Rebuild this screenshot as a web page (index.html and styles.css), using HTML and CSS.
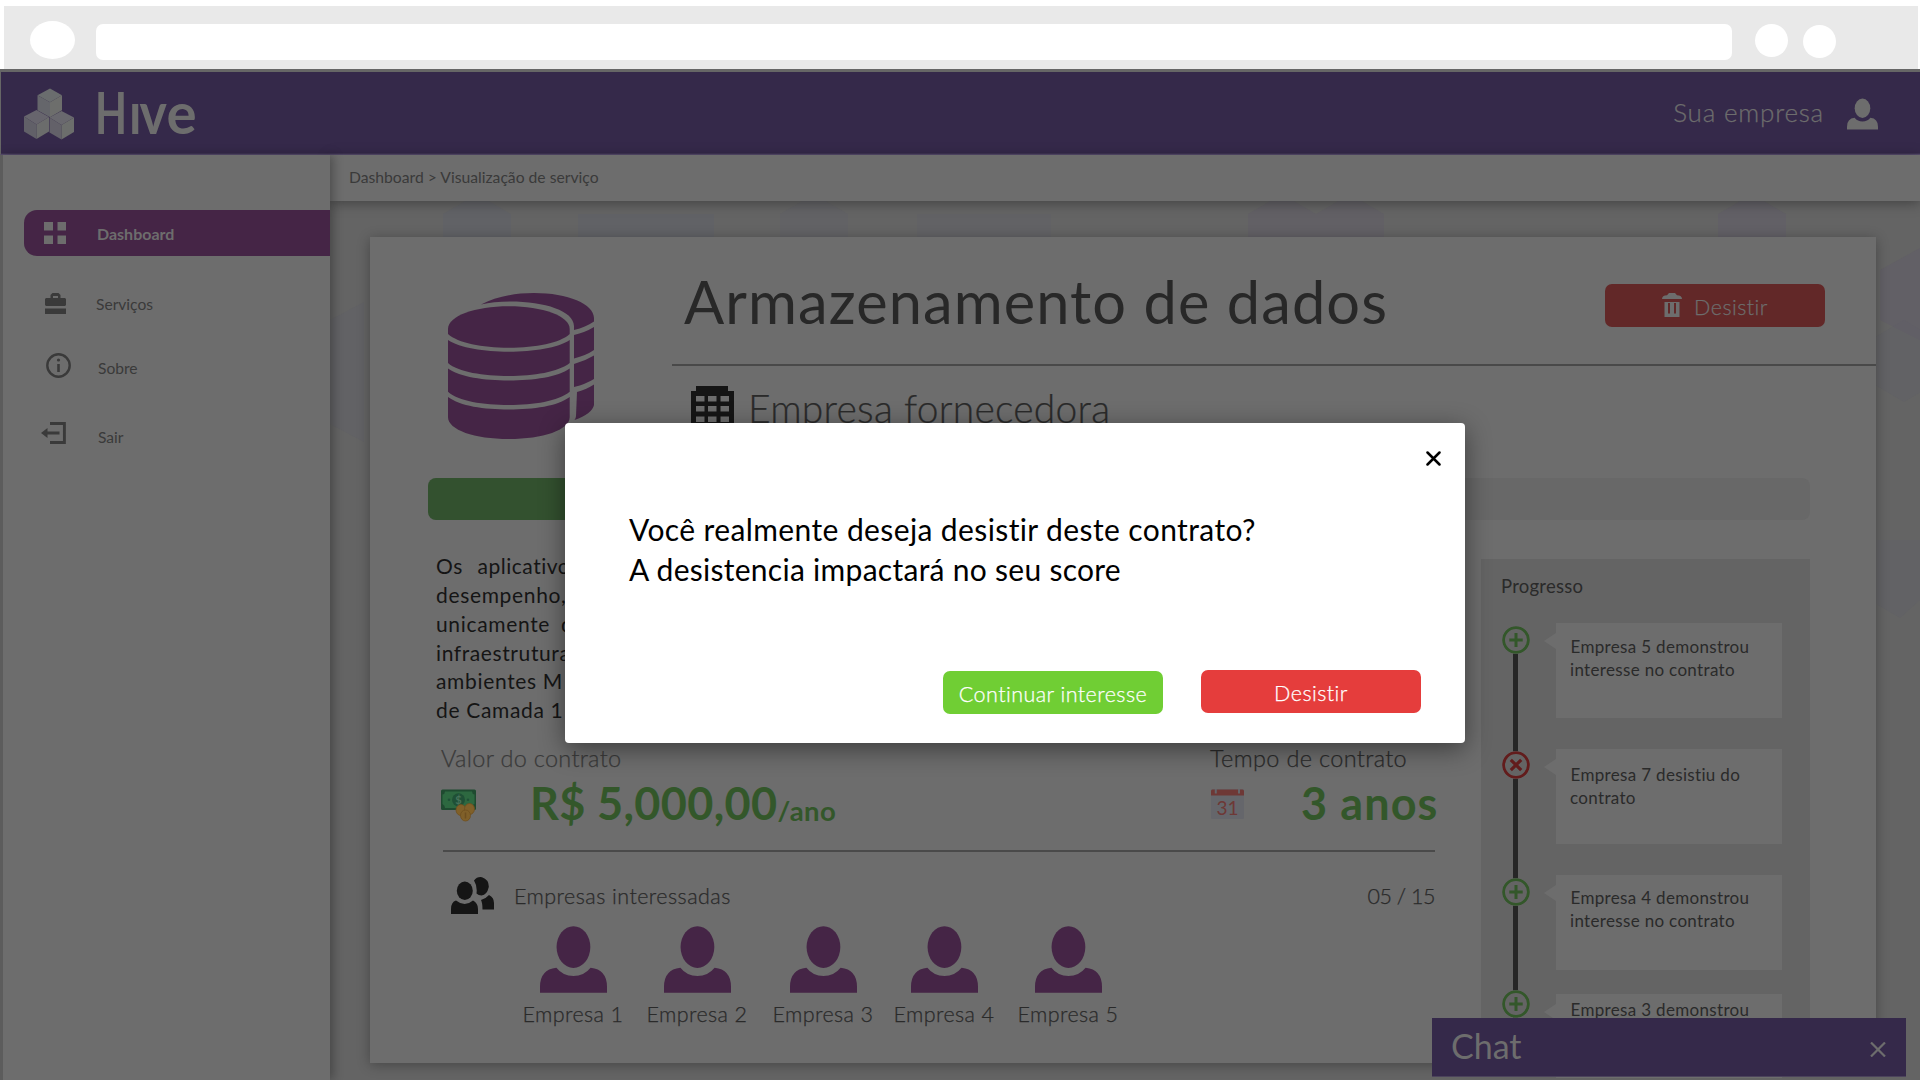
FILE: index.html
```html
<!DOCTYPE html>
<html lang="pt-BR">
<head>
<meta charset="utf-8">
<title>Hive - Visualização de serviço</title>
<link rel="stylesheet" href="styles.css">
</head>
<body>
<svg width="0" height="0" class="sprites" aria-hidden="true">
  <defs>
    <symbol id="person" viewBox="0 0 67.5 67"><ellipse cx="33.7" cy="21" rx="17" ry="21"/><path d="M0 67V61Q0 43.500 16.500 41.700Q23 50 33.700 50T51 41.700Q67.500 43.500 67.500 61V67Z"/></symbol>
    <symbol id="plus" viewBox="0 0 28 28"><g fill="none" stroke="#33572a"><circle cx="14" cy="14" r="12.400" stroke-width="2.800"/><path d="M7.300 14h13.400M14 7v14" stroke-width="3"/></g></symbol>
    <symbol id="cross" viewBox="0 0 28 28"><g fill="none" stroke="#621c1c"><circle cx="14" cy="14" r="12.400" stroke-width="2.800"/><path d="M8.800 8.800l10.400 10.400M19.200 8.800L8.800 19.200" stroke-width="3.200"/></g></symbol>
  </defs>
</svg>

<div class="browser">
  <span class="browser-circle big"></span>
  <span class="browser-address"></span>
  <span class="browser-circle"></span>
  <span class="browser-circle low"></span>
</div>

<header class="topbar">
  <svg class="logo" width="190" height="66" viewBox="15 80 190 66">
    <path fill="#6a6d6e" d="M50 88.500l12 6.700-12 7-12.500-7z"/><path fill="#65666b" d="M37.500 95.200l12.500 7v15l-12.500-7z"/><path fill="#6d6e6c" d="M50 102.200l12-7v15l-12 7z"/>
    <path fill="#67656d" d="M36.500 110l12.500 7-12.500 7.500L24 116.500z"/><path fill="#616068" d="M24 116.500l12.500 8V139L24 131.500z"/><path fill="#6b6c6c" d="M36.500 124.500L49 117v14.500L36.500 139z"/>
    <path fill="#69686e" d="M61.500 111l12.500 6.500-12.500 7.500L49.500 117.500z"/><path fill="#636169" d="M49.500 117.500l12 7.500v14.500l-12-7z"/><path fill="#6c6e6c" d="M61.500 125l12.500-7.500V132l-12.500 7.500z"/>
    <g class="logo-text"><text transform="translate(95 134) scale(.73 1)">H</text><text transform="translate(129 134) scale(.86 1)">ı</text><text transform="translate(139.500 134) scale(.91 1)">v</text><text transform="translate(166.500 134) scale(.99 1)">e</text></g>
  </svg>
  <div class="account">
    <span>Sua empresa</span>
    <svg width="31" height="32"><use href="#person" width="31" height="32"/></svg>
  </div>
</header>

<div class="layout">
  <nav class="sidebar">
    <a class="nav-item active"><svg width="22" height="22" viewBox="0 0 22 22" fill="#6d6d6d"><path d="M0 0h9v8.500H0zM13.500 0H22v8.500h-8.500zM0 13.500h9V22H0zM13.500 13.500H22V22h-8.500z"/></svg><span>Dashboard</span></a>
    <a class="nav-item services"><svg width="21" height="21" viewBox="0 0 21 21" fill="#3a3a3a"><path fill-rule="evenodd" d="M1 5h4.500V2L7.500 0h6l2 2v3H20l1 1v6l-1 1H1l-1-1V6zM8 3v2h5V3z"/><path d="M0 15.500h21V21H0z"/></svg><span>Serviços</span></a>
    <a class="nav-item about"><svg width="25" height="25" viewBox="0 0 25 25"><circle cx="12.500" cy="12.500" r="11.200" fill="none" stroke="#3a3a3a" stroke-width="2.400"/><path d="M12.500 11v8" stroke="#3a3a3a" stroke-width="2.600"/><circle cx="12.500" cy="7" r="1.600" fill="#3a3a3a"/></svg><span>Sobre</span></a>
    <a class="nav-item exit"><svg width="25" height="22" viewBox="0 0 25 22" fill="none" stroke="#3a3a3a" stroke-width="2.900"><path d="M9 1.500h14.400v19H9M5 11h13.500"/><path fill="#3a3a3a" stroke="none" d="M0 11l6.500-5v10z"/></svg><span>Sair</span></a>
  </nav>

  <main class="main">
    <div class="breadcrumb">Dashboard &gt; Visualização de serviço</div>
    <div class="content">
      <svg class="pattern" width="1590" height="879" viewBox="330 201 1590 879">
        <g fill="#5f6067">
          <path d="M443 214l34-20 34 20v40h-68zM578 214h68v40h-68zM646 214h68v40h-68z" opacity=".6"/>
          <path d="M780 214l34-20 34 20v40h-68zM917 214h134v40H917zM330 320l34-18v140l-34-18z" opacity=".45"/>
          <path d="M1870 340l34-20 34 20v42l-34 20-34-20zM1876 540h44v60l-20 18-24-14z" opacity=".45"/>
        </g>
        <g fill="#605c67">
          <path d="M1248 214l34-20 34 20 34-20 34 20v40h-136z" opacity=".45"/>
          <path d="M1718 214l34-20 34 20v40h-68zM1880 270l40-22v92l-40-20z" opacity=".5"/>
        </g>
      </svg>

      <article class="card">
        <section class="hero">
          <div class="hero-icon">
            <svg width="146" height="146" viewBox="0 0 146 146" fill="#452546">
              <path d="M0 36C0 23 27 13.300 60.800 13.300S121.700 23 121.700 36v5C112 50 88 54.700 60.800 54.700S10 50 0 41z"/>
              <path d="M0 47C12 55 36 58.700 60.800 58.700S110 55 121.700 47v23C110 79 86 83 60.800 83S10 79 0 70z"/>
              <path d="M0 75.500C12 84 36 87.500 60.800 87.500S110 84 121.700 75.500v23.200C110 108 86 112 60.800 112S10 108 0 98.700z"/>
              <path d="M0 104C12 113 36 116.500 60.800 116.500S110 113 121.700 104v20C121.700 137 95 146 60.800 146S0 137 0 124z"/>
              <path d="M33 11.500C47 4 66 0 86 0C120 0 146 11 146 25v3.500C140 32.500 134 35 126 37v-4C126 18 97 8.500 62 8.500C51 8.500 41 9.500 33 11.500z"/>
              <path d="M126 42q11-2.500 20-8v23q-8 5.500-20 8.500zM126 71q11-3 20-8.500V86q-8 5-20 8zM129 99q10-3 17-7.500V112q-2 9-19.500 15 1.500-2 1.500-4z"/>
            </svg>
          </div>
          <div class="hero-info">
            <div class="hero-title">
              <h1>Armazenamento de dados</h1>
              <button class="btn btn-trash"><svg width="20" height="24" viewBox="0 0 20 24" fill="#6d6d6d"><path d="M0 6Q0 2.500 5 2.200L7 0h6l2 2.200Q20 2.500 20 6z"/><path fill-rule="evenodd" d="M2.500 9h15v15h-15zM6 10v10.500h2V10zM12 10v10.500h2V10z"/></svg><span>Desistir</span></button>
            </div>
            <div class="provider">
              <svg width="43" height="46" viewBox="0 0 43 46" fill="#151515"><path fill-rule="evenodd" d="M5 0h32v5h6v41H0V5h5zM5 10v5.500h8.500V10zM17 10v5.500h8.500V10zM29.500 10v5.500H38V10zM5 20v5.500h8.500V20zM17 20v5.500h8.500V20zM29.500 20v5.500H38V20zM5 30.500V36h8.500v-5.500zM17 30.500V36h8.500v-5.500zM29.500 30.500V36H38v-5.500z"/></svg>
              <span>Empresa fornecedora</span>
            </div>
          </div>
        </section>

        <div class="progress"><div class="progress-fill"></div></div>

        <section class="details">
          <div class="summary">
            <div class="description">
              <span class="wide">Os aplicativos</span><span>desempenho,</span><span class="medium">unicamente d</span><span class="tight">infraestrutura</span><span>ambientes M</span><span>de Camada 1</span>
            </div>
            <div class="figures">
              <div class="figure">
                <p class="figure-label muted">Valor do contrato</p>
                <div class="figure-value">
                  <svg class="money" width="36" height="33" viewBox="0 0 36 33"><rect y=".5" width="35" height="20.500" rx="1.500" fill="#1f4a30"/><path fill="#2d6840" d="M4 2.500h27q0 2.500 2.500 3v9.500q-2.500.500-2.500 4H4q0-2.500-2.500-4V5.500q2.500-.5 2.500-3z"/><circle cx="17.500" cy="10.800" r="6.500" fill="#1f5036"/><circle cx="8" cy="10.800" r="1.300" fill="#1f5036"/><circle cx="27" cy="10.800" r="1.300" fill="#1f5036"/><text x="17.500" y="15" text-anchor="middle" class="money-sign">$</text><g fill="#806029" stroke="#6e4f20" stroke-width=".8"><ellipse cx="20" cy="21" rx="5" ry="5.500"/><ellipse cx="28.500" cy="20" rx="5" ry="5.500"/><ellipse cx="24.500" cy="26.500" rx="5" ry="5.500"/></g><path d="M24.500 23.500v6" stroke="#6e4f20" stroke-width="1.500"/></svg>
                  <strong>R$ 5,000,00</strong><small>/ano</small>
                </div>
              </div>
              <div class="figure term">
                <p class="figure-label">Tempo de contrato</p>
                <div class="figure-value">
                  <svg class="calendar" width="33" height="30" viewBox="0 0 33 30"><rect width="33" height="30" rx="1.500" fill="#65666b"/><path d="M0 6.500V2q0-1.500 1.500-1.500h30q1.500 0 1.500 1.500v4.500z" fill="#6e3836"/><path d="M4.800 0v4.500M28 0v4.500" stroke="#65666b" stroke-width="2"/><text x="16.500" y="25.500" text-anchor="middle" class="calendar-day">31</text></svg>
                  <strong>3 anos</strong>
                </div>
              </div>
            </div>
            <div class="interested">
              <svg width="43" height="37" viewBox="0 0 43 37" fill="#151515"><ellipse cx="13.800" cy="13.700" rx="8" ry="9.200"/><path d="M0 37v-5Q0 25 5 23.500Q13.800 30.500 22 23.500Q27 26 27 32v5zM23 3.500Q26-.5 31 .2 38 2.500 37.800 10 36 18 30.500 18.500 27.500 18.500 25.500 16.500 26.500 9 23 3.500zM30 23Q35 21.500 38 18 43 20.500 43 26v6.500H31.500Q31.500 26 30 23z"/></svg>
              <span>Empresas interessadas</span>
              <span class="count">05 / 15</span>
            </div>
            <ul class="companies">
              <li><svg width="67" height="67"><use href="#person"/></svg>Empresa 1</li>
              <li><svg width="67" height="67"><use href="#person"/></svg>Empresa 2</li>
              <li><svg width="67" height="67"><use href="#person"/></svg>Empresa 3</li>
              <li><svg width="67" height="67"><use href="#person"/></svg>Empresa 4</li>
              <li><svg width="67" height="67"><use href="#person"/></svg>Empresa 5</li>
            </ul>
          </div>

          <aside class="history">
            <h2>Progresso</h2>
            <ol class="timeline">
              <li><svg class="node" width="28" height="28"><use href="#plus"/></svg><p>Empresa 5 demonstrou<br>interesse no contrato</p></li>
              <li><svg class="node" width="28" height="28"><use href="#cross"/></svg><p>Empresa 7 desistiu do<br>contrato</p></li>
              <li><svg class="node" width="28" height="28"><use href="#plus"/></svg><p>Empresa 4 demonstrou<br>interesse no contrato</p></li>
              <li><svg class="node" width="28" height="28"><use href="#plus"/></svg><p>Empresa 3 demonstrou</p></li>
            </ol>
          </aside>
        </section>
      </article>
    </div>
  </main>
</div>

<div class="chat"><span>Chat</span><svg width="16" height="15" viewBox="0 0 16 15"><path d="M1 .500l14 14M15 .500l-14 14" stroke="#6d6d6d" stroke-width="2.200"/></svg></div>

<div class="modal" role="dialog">
  <svg class="modal-close" width="15" height="15" viewBox="0 0 15 15"><path d="M1.500 1.500l12 12M13.500 1.500l-12 12" stroke="#000" stroke-width="2.500" stroke-linecap="round"/></svg>
  <p class="modal-text">Você realmente deseja desistir deste contrato?<br><span>A desistencia impactará no seu score</span></p>
  <div class="modal-actions">
    <button class="btn btn-keep">Continuar interesse</button>
    <button class="btn btn-quit">Desistir</button>
  </div>
</div>
</body>
</html>
```
FILE: styles.css
```css
* { box-sizing: border-box; }

body {
  position: relative;
  width: 1920px;
  height: 1080px;
  margin: 0;
  overflow: hidden;
  background: #fff;
  font-family: Lato, "Open Sans", sans-serif;
  color: #2a2a2a;
}

p, h1, h2, ul, ol { margin: 0; padding: 0; font-weight: 400; list-style: none; }
svg { display: block; flex: none; }
.sprites { position: absolute; }

/* Browser frame */
.browser {
  display: flex;
  align-items: flex-start;
  width: 1914px;
  height: 63px;
  margin: 6px 2px 0 4px;
  padding: 18px 0 0 26px;
  background: #e9e9e9;
}
.browser-circle { width: 33px; height: 33px; margin-left: 23px; border-radius: 50%; background: #fff; }
.browser-circle.big { width: 45px; height: 38px; margin: -3px 21px 0 0; }
.browser-circle.low { margin: 1px 0 0 15px; }
.browser-address { width: 1636px; height: 36px; border-radius: 7px; background: #fff; }

/* Top bar */
.topbar {
  display: flex;
  justify-content: space-between;
  height: 86px;
  border-top: 3px solid #666;
  border-bottom: 1px solid #564b6c;
  border-left: 1px solid #666;
  background: #35294a;
  box-shadow: inset 0 -1px #3f3454;
}
.logo { margin: 8px 0 0 14px; overflow: visible; }
.logo-text { font: 700 57px Lato, sans-serif; fill: #6d6d6d; }
.account {
  display: flex;
  gap: 23px;
  margin: 25px 42px 0 0;
  color: #6d6d6d;
  fill: #6d6d6d;
  font-size: 26px;
  font-weight: 300;
  line-height: 30px;
  letter-spacing: .8px;
}
.account svg { margin-top: 1px; }

/* Light text is drawn slightly heavier for legibility */
.account, .provider, .figure-label, .interested, .companies, .btn { -webkit-text-stroke: .25px currentColor; }

.layout { display: grid; grid-template-columns: 330px 1590px; height: 925px; }

/* Sidebar */
.sidebar {
  z-index: 2;
  padding-top: 55px;
  border-left: 3px solid #5c5c5c;
  background: #6d6d6d;
  box-shadow: 3px 0 10px rgba(0, 0, 0, .3);
}
.nav-item {
  display: grid;
  grid-template-columns: 55px auto;
  align-items: center;
  height: 24px;
  padding-left: 39px;
  color: #3a3a3a;
  font-size: 15.6px;
}
.nav-item svg { justify-self: start; }
.nav-item.active {
  height: 46px;
  margin-left: 21px;
  padding-left: 20px;
  grid-template-columns: 53px auto;
  border-radius: 13px 0 0 13px;
  background: #452546;
  color: #6d6d6d;
  font-size: 16px;
  font-weight: 700;
}
.services { margin-top: 36px; }
.services svg { margin: -1px 0 0 3px; }
.services span { margin-left: -1px; }
.about { margin-top: 40px; }
.about svg { margin: -5px 0 0 4px; }
.exit { margin-top: 45px; }
.exit svg { margin: -9px 0 0 -1px; }
.exit span, .about span { margin-left: 1px; }

/* Main area */
.main { position: relative; z-index: 1; display: grid; grid-template-rows: 46px 879px; }
.breadcrumb {
  z-index: 1;
  padding-left: 19px;
  background: #6d6d6d;
  box-shadow: 0 2px 12px rgba(0, 0, 0, .35);
  color: #3a3a3a;
  font-size: 15.7px;
  line-height: 44px;
}
.content { position: relative; padding: 36px 44px 0 40px; background: #646464; }
.pattern { position: absolute; inset: 0; }

.card {
  position: relative;
  height: 826px;
  background: #6d6d6d;
  box-shadow: 0 2px 12px rgba(0, 0, 0, .3);
}
.hero { display: grid; grid-template-columns: 302px 1fr; height: 241px; }
.hero-icon { padding: 56px 0 0 78px; }
.hero-title {
  display: flex;
  justify-content: space-between;
  height: 129px;
  padding: 0 51px 0 12px;
  border-bottom: 2px solid #494949;
}
h1 { font-size: 59.5px; line-height: 129px; letter-spacing: 1.1px; color: #282828; white-space: nowrap; }

.btn {
  display: flex;
  align-items: center;
  justify-content: center;
  width: 220px;
  height: 43px;
  padding: 0;
  border: 0;
  border-radius: 7px;
  color: #fff;
  font: 300 21.5px Lato, sans-serif;
  letter-spacing: .45px;
}
.btn-trash { gap: 12px; margin-top: 47px; background: #622828; color: #6d6d6d; }
.btn-trash span { padding-top: 3px; }
.btn-trash svg { margin-top: -1px; }

.provider {
  display: flex;
  gap: 14px;
  padding: 20px 0 0 19px;
  font-size: 39px;
  font-weight: 300;
  line-height: 45px;
  letter-spacing: .25px;
}

.progress { height: 42px; margin: 0 66px 0 58px; border-radius: 8px; background: #686868; }
.progress-fill { width: 50%; height: 100%; border-radius: 8px; background: #33512f; }

.details { display: grid; grid-template-columns: 1008px 329px; gap: 45px; padding-left: 58px; }
.summary { padding-top: 32px; }
.description {
  display: grid;
  width: 129px;
  height: 173px;
  margin-left: 8px;
  overflow: hidden;
  grid-auto-rows: 28.85px;
  color: #151515;
  font-size: 21px;
  line-height: 28.85px;
  letter-spacing: .66px;
  white-space: nowrap;
}
.description .wide { word-spacing: 9px; letter-spacing: .5px; }
.description .medium { word-spacing: 5px; }
.description .tight { letter-spacing: .6px; }

.figures {
  display: grid;
  grid-template-columns: 769px auto;
  height: 110px;
  margin: 17px 1px 0 15px;
  background: linear-gradient(#4a4a4a, #4a4a4a) 0 100% / 100% 2px no-repeat;
}
.figure-label { margin-left: -2px; font-size: 23.5px; font-weight: 300; line-height: 32px; letter-spacing: .35px; }
.figure-label.muted { color: #3a3a3a; letter-spacing: .3px; }
.figure-value { display: flex; height: 58px; margin-left: -2px; color: #33572a; line-height: 59px; white-space: nowrap; }
.figure-value svg { margin-top: 15px; }
.figure-value strong { margin-left: 53px; font-size: 45px; letter-spacing: .35px; }
.figure-value small { font-size: 27.5px; font-weight: 700; letter-spacing: .5px; line-height: 73px; }
.term .figure-value svg { margin-left: 1px; }
.term .figure-value strong { margin-left: 57px; letter-spacing: 1.1px; }
.money-sign { font: 700 11px Lato, sans-serif; fill: #47725a; }
.calendar-day { font: 400 19px Lato, sans-serif; fill: #6e3836; }

.interested {
  display: flex;
  align-items: center;
  height: 41px;
  margin: 23px 1px 0 23px;
  font-size: 21.5px;
  font-weight: 300;
  letter-spacing: .45px;
}
.interested span { margin-left: 20px; }
.interested .count { margin-left: auto; letter-spacing: -.5px; }

.companies { display: flex; margin: 10px 0 0 83px; }
.companies li {
  display: flex;
  flex-direction: column;
  align-items: center;
  width: 124px;
  font-size: 21.5px;
  font-weight: 300;
  line-height: 26px;
  letter-spacing: .4px;
}
.companies li:nth-child(3) { margin-left: 2px; }
.companies li:nth-child(4) { margin-left: -3px; }
.companies svg { margin-bottom: 8px; fill: #452546; }

/* Progress history */
.history { height: 480px; margin-top: 39px; padding-left: 20px; background: #646464; }
h2 { padding-top: 14px; font-size: 18.5px; line-height: 26px; letter-spacing: .25px; }
.timeline {
  height: 440px;
  padding-top: 24px;
  background: linear-gradient(#262626, #262626) 12px 40px / 5px 100% no-repeat;
}
.timeline li { display: flex; align-items: flex-start; gap: 26px; height: 126px; padding-left: 1px; }
.timeline li:nth-child(3) { height: 119px; }
.node { margin-top: 3px; border-radius: 50%; background: #646464; }
.timeline p {
  position: relative;
  width: 226px;
  height: 95px;
  padding: 12px 0 0 14px;
  background: #6d6d6d;
  font-size: 17px;
  line-height: 23.2px;
  letter-spacing: .33px;
  text-indent: .5px;
  white-space: nowrap;
}
.timeline p::before {
  content: "";
  position: absolute;
  top: 10px;
  left: -12px;
  border: solid transparent;
  border-width: 8.5px 12px 8.5px 0;
  border-right-color: #6d6d6d;
}
.timeline li:nth-child(2) p { padding-top: 14px; }
.timeline li:nth-child(2) .node { margin-top: 2px; }
.timeline li:nth-child(3) p { padding-top: 11px; }
.timeline li:nth-child(4) p { padding-top: 4px; height: 84px; }
.timeline li:nth-child(4) .node { margin-top: -4px; }

/* Chat bar */
.chat {
  position: absolute;
  z-index: 2;
  left: 1432px;
  top: 1018px;
  display: flex;
  justify-content: space-between;
  width: 474px;
  height: 59px;
  padding: 0 20px 0 19px;
  border-bottom: 1px solid #4c435c;
  background: #35294a;
  color: #6d6d6d;
  font-size: 34px;
  line-height: 55px;
}
.chat svg { margin-top: 24px; }

/* Confirmation dialog */
.modal {
  position: absolute;
  z-index: 3;
  left: 565px;
  top: 423px;
  width: 900px;
  height: 320px;
  padding: 28px 44px 0 64px;
  border-radius: 4px;
  background: #fff;
  box-shadow: 0 6px 26px rgba(0, 0, 0, .45);
  color: #000;
}
.modal-close { margin: 0 -20px 0 auto; }
.modal-text { margin-top: 43px; font-size: 30px; line-height: 40px; letter-spacing: .39px; white-space: nowrap; }
.modal-text span { letter-spacing: .28px; }
.modal-actions { display: flex; justify-content: flex-end; gap: 38px; margin-top: 81px; }
.btn-keep { margin-top: 1px; background: #70ce34; }
.btn-quit { background: #e53d3c; }
.btn-keep, .btn-quit { padding-top: 2px; }
```
